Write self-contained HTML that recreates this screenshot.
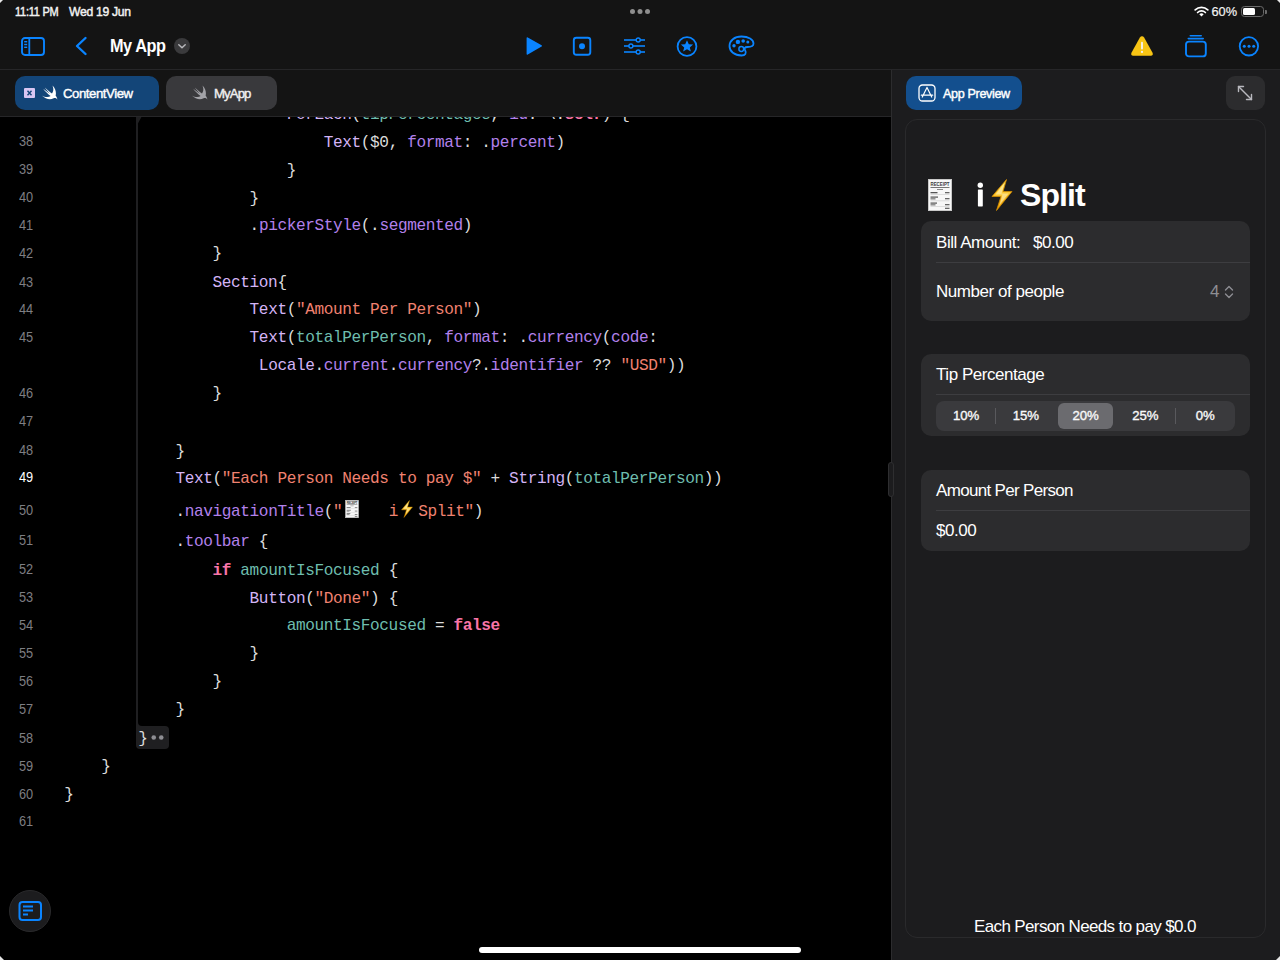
<!DOCTYPE html>
<html><head><meta charset="utf-8">
<style>
*{margin:0;padding:0;box-sizing:border-box}
html,body{width:1280px;height:960px;overflow:hidden;background:#000}
body{position:relative;font-family:"Liberation Sans",sans-serif;color:#fff}
.abs{position:absolute}
svg{display:block}
#top{left:0;top:0;width:1280px;height:70px;background:#141414}
#topline{left:0;top:69px;width:1280px;height:1px;background:#262628}
#tabbar{left:0;top:70px;width:891px;height:47px;background:#141414}
#tabline{left:0;top:116px;width:891px;height:1px;background:#262628}
#code{left:0;top:117px;width:891px;height:843px;background:#000;overflow:hidden}
#right{left:891px;top:70px;width:389px;height:890px;background:#1c1c1e}
#divider{left:891px;top:70px;width:1px;height:890px;background:#2c2c2e}
.st{font-size:12.8px;font-weight:normal;-webkit-text-stroke:0.45px #f2f2f2;color:#f2f2f2;top:3px;line-height:16px;letter-spacing:-0.3px;white-space:pre}
.tab{top:76px;height:34px;border-radius:10px}
.code{font-family:"Liberation Mono",monospace;font-size:16.1px;letter-spacing:-0.39px;white-space:pre;line-height:28px;height:28px}
.ln{font-size:14.5px;color:#7e7e82;left:19px;line-height:28px;height:28px;transform:scaleX(0.88);transform-origin:0 0}
.p{color:#dcdcdc}.t{color:#d3b4f6}.m{color:#b281eb}.v{color:#6ebdae}.s{color:#f08270}.k{color:#f975a8;font-weight:bold}
.sec{left:921px;width:329px;background:#2c2c2e;border-radius:10px}
.ui{font-size:17px;letter-spacing:-0.45px;white-space:pre;line-height:20px}
.seg{font-size:13.2px;font-weight:normal;line-height:16px;text-align:center;width:60px;letter-spacing:-0.1px;-webkit-text-stroke:0.35px #fff;color:#f2f2f5}
</style></head><body>
<div id="top" class="abs"></div>
<div id="topline" class="abs"></div>
<div id="tabbar" class="abs"></div>
<div id="tabline" class="abs"></div>
<div id="code" class="abs">
<!-- guide line -->
<div class="abs" style="left:136px;top:0;width:2px;height:612px;background:#1f1f21"></div>
<div class="abs" style="left:136px;top:-1px;width:0;height:0;border-left:6px solid #1f1f21;border-bottom:11px solid transparent"></div>
<div class="abs" style="left:136px;top:609px;width:33px;height:23px;background:#1f1f21;border-radius:0 4px 4px 4px"></div>
<svg class="abs" style="left:148px;top:616px" width="18" height="9" viewBox="0 0 18 9"><g fill="#8e8e93"><circle cx="5.75" cy="4.5" r="2.3"/><circle cx="13.25" cy="4.5" r="2.3"/></g></svg>
<div class="abs" style="left:138px;top:605px;width:4px;height:4px;background:#1f1f21"></div><div class="abs" style="left:138px;top:601px;width:8px;height:8px;background:#000;border-bottom-left-radius:4px"></div>
<div class="abs ln" style="top:10.00px">38</div>
<div class="abs ln" style="top:38.20px">39</div>
<div class="abs ln" style="top:66.30px">40</div>
<div class="abs ln" style="top:93.70px">41</div>
<div class="abs ln" style="top:121.80px">42</div>
<div class="abs ln" style="top:150.70px">43</div>
<div class="abs ln" style="top:177.80px">44</div>
<div class="abs ln" style="top:205.50px">45</div>
<div class="abs ln" style="top:261.80px">46</div>
<div class="abs ln" style="top:290.00px">47</div>
<div class="abs ln" style="top:319.00px">48</div>
<div class="abs ln" style="top:346.30px;color:#ffffff">49</div>
<div class="abs ln" style="top:379.30px">50</div>
<div class="abs ln" style="top:409.30px">51</div>
<div class="abs ln" style="top:438.20px">52</div>
<div class="abs ln" style="top:466.00px">53</div>
<div class="abs ln" style="top:493.70px">54</div>
<div class="abs ln" style="top:521.90px">55</div>
<div class="abs ln" style="top:549.70px">56</div>
<div class="abs ln" style="top:577.80px">57</div>
<div class="abs ln" style="top:606.90px">58</div>
<div class="abs ln" style="top:634.50px">59</div>
<div class="abs ln" style="top:662.80px">60</div>
<div class="abs ln" style="top:690.40px">61</div>
<div class="abs code" style="left:286.68px;top:-15.70px"><span class="t">ForEach</span><span class="p">(</span><span class="v">tipPercentages</span><span class="p">, </span><span class="m">id</span><span class="p">: \.</span><span class="k">self</span><span class="p">) {</span></div>
<div class="abs code" style="left:323.76px;top:11.50px"><span class="t">Text</span><span class="p">($0, </span><span class="m">format</span><span class="p">: .</span><span class="m">percent</span><span class="p">)</span></div>
<div class="abs code" style="left:286.68px;top:39.70px"><span class="p">}</span></div>
<div class="abs code" style="left:249.60px;top:67.80px"><span class="p">}</span></div>
<div class="abs code" style="left:249.60px;top:95.20px"><span class="p">.</span><span class="m">pickerStyle</span><span class="p">(.</span><span class="m">segmented</span><span class="p">)</span></div>
<div class="abs code" style="left:212.52px;top:123.30px"><span class="p">}</span></div>
<div class="abs code" style="left:212.52px;top:152.20px"><span class="t">Section</span><span class="p">{</span></div>
<div class="abs code" style="left:249.60px;top:179.30px"><span class="t">Text</span><span class="p">(</span><span class="s">"Amount Per Person"</span><span class="p">)</span></div>
<div class="abs code" style="left:249.60px;top:207.00px"><span class="t">Text</span><span class="p">(</span><span class="v">totalPerPerson</span><span class="p">, </span><span class="m">format</span><span class="p">: .</span><span class="m">currency</span><span class="p">(</span><span class="m">code</span><span class="p">:</span></div>
<div class="abs code" style="left:258.87px;top:235.10px"><span class="t">Locale</span><span class="p">.</span><span class="m">current</span><span class="p">.</span><span class="m">currency</span><span class="p">?.</span><span class="m">identifier</span><span class="p"> ?? </span><span class="s">"USD"</span><span class="p">))</span></div>
<div class="abs code" style="left:212.52px;top:263.30px"><span class="p">}</span></div>
<div class="abs code" style="left:175.44px;top:320.50px"><span class="p">}</span></div>
<div class="abs code" style="left:175.44px;top:347.80px"><span class="t">Text</span><span class="p">(</span><span class="s">"Each Person Needs to pay $"</span><span class="p"> + </span><span class="t">String</span><span class="p">(</span><span class="v">totalPerPerson</span><span class="p">))</span></div>
<div class="abs code" style="left:175.44px;top:380.80px"><span class="p">.</span><span class="m">navigationTitle</span><span class="p">(</span><span class="s">"</span><span style="display:inline-block;width:18.6px;height:10px;position:relative"><span style="position:absolute;left:3px;top:-6px"><svg width="14" height="18" viewBox="0 0 24 32" style="display:block"><rect x="0.5" y="0.5" width="23" height="31" fill="#f7f7f7" stroke="#c8c8c8" stroke-width="1"/><text x="12" y="7" font-family="Liberation Sans" font-weight="bold" font-size="6" text-anchor="middle" fill="#3a3a3a" textLength="19" lengthAdjust="spacingAndGlyphs">RECEIPT</text><rect x="2.5" y="8" width="19" height="0.9" fill="#666"/><rect x="9" y="10" width="6" height="1" fill="#888"/><rect x="2.5" y="13" width="7" height="1.3" fill="#555"/><rect x="17" y="13" width="4.5" height="1.3" fill="#666"/><rect x="2.5" y="15" width="19" height="0.7" fill="#d0d0d0"/><rect x="2.5" y="17.5" width="7.5" height="1.2" fill="#555"/><rect x="2.5" y="19.3" width="5" height="1.1" fill="#666"/><rect x="17" y="19" width="4.5" height="1.3" fill="#666"/><rect x="2.5" y="21.5" width="19" height="0.7" fill="#d0d0d0"/><rect x="2.5" y="23.5" width="6.5" height="1.2" fill="#555"/><rect x="2.5" y="25.3" width="5" height="1.1" fill="#666"/><rect x="17" y="25" width="4.5" height="1.3" fill="#666"/><rect x="2.5" y="27.3" width="19" height="0.7" fill="#d0d0d0"/><rect x="17" y="28.7" width="4.5" height="1.3" fill="#666"/></svg></span></span><span class="s">   i</span><span style="display:inline-block;width:20.2px;height:10px;position:relative"><span style="position:absolute;left:3.5px;top:-6px"><svg width="12" height="18" viewBox="0 0 22 32" style="display:block"><defs><linearGradient id="bg12" x1="0" y1="0" x2="0" y2="1"><stop offset="0" stop-color="#ffe35a"/><stop offset="1" stop-color="#f5a300"/></linearGradient></defs><path d="M15.5 0.5 L1 17.5 L10 17.5 L5.5 31.5 L21 12.5 L12 12.5 Z" fill="url(#bg12)" stroke="#d08a00" stroke-width="0.8" stroke-linejoin="round"/><path d="M13.5 4 L4.5 15.5 L11.5 15.5 L8.5 26 L17.5 14.5 L10.5 14.5 Z" fill="#fff6c8" opacity="0.55"/></svg></span></span><span class="s">Split"</span><span class="p">)</span></div>
<div class="abs code" style="left:175.44px;top:410.80px"><span class="p">.</span><span class="m">toolbar</span><span class="p"> {</span></div>
<div class="abs code" style="left:212.52px;top:439.70px"><span class="k">if</span><span class="p"> </span><span class="v">amountIsFocused</span><span class="p"> {</span></div>
<div class="abs code" style="left:249.60px;top:467.50px"><span class="t">Button</span><span class="p">(</span><span class="s">"Done"</span><span class="p">) {</span></div>
<div class="abs code" style="left:286.68px;top:495.20px"><span class="v">amountIsFocused</span><span class="p"> = </span><span class="k">false</span></div>
<div class="abs code" style="left:249.60px;top:523.40px"><span class="p">}</span></div>
<div class="abs code" style="left:212.52px;top:551.20px"><span class="p">}</span></div>
<div class="abs code" style="left:175.44px;top:579.30px"><span class="p">}</span></div>
<div class="abs code" style="left:138.36px;top:608.40px"><span class="p">}</span></div>
<div class="abs code" style="left:101.28px;top:636.00px"><span class="p">}</span></div>
<div class="abs code" style="left:64.20px;top:664.30px"><span class="p">}</span></div>
<!-- floating button -->
<div class="abs" style="left:9px;top:773px;width:42px;height:42px;border-radius:50%;background:#1c1c1e;border:1px solid #2a2a2c"></div>
<svg class="abs" style="left:17px;top:783px" width="26" height="22" viewBox="0 0 26 22"><rect x="2.5" y="2" width="21.5" height="18" rx="3" fill="none" stroke="#0a84ff" stroke-width="2"/><rect x="6" y="5.5" width="10" height="2" fill="#0a84ff"/><rect x="6" y="9.5" width="10" height="2" fill="#0a84ff"/><rect x="6" y="13.5" width="5" height="2" fill="#0a84ff"/></svg>
</div>
<div id="right" class="abs"></div>
<div id="divider" class="abs"></div>
<div class="abs" style="left:888px;top:462px;width:6px;height:35px;border-radius:3px;background:#1c1c1e;border:1px solid #2e2e30"></div>

<!-- status bar -->
<div class="abs st" style="left:15px;top:3.8px;transform:scaleX(0.86);transform-origin:0 0">11:11 PM</div>
<div class="abs st" style="left:68.5px;top:3.8px;transform:scaleX(0.95);transform-origin:0 0">Wed 19 Jun</div>
<svg class="abs" style="left:628px;top:6px" width="24" height="11" viewBox="0 0 24 11"><g fill="#8e8e8e"><circle cx="4.5" cy="5.5" r="2.5"/><circle cx="12" cy="5.5" r="2.5"/><circle cx="19.5" cy="5.5" r="2.5"/></g></svg>
<svg class="abs" style="left:1194px;top:6px" width="15" height="11" viewBox="0 0 15 11"><path d="M7.5 10.5 L5.3 8.2 A3.2 3.2 0 0 1 9.7 8.2 Z" fill="#fff"/><path d="M3.6 6.5 A5.6 5.6 0 0 1 11.4 6.5" stroke="#fff" stroke-width="1.7" fill="none" stroke-linecap="round"/><path d="M1.2 3.9 A9 9 0 0 1 13.8 3.9" stroke="#fff" stroke-width="1.7" fill="none" stroke-linecap="round"/></svg>
<div class="abs st" style="left:1211.5px;letter-spacing:0;top:3.5px;-webkit-text-stroke:0.2px #f2f2f2">60%</div>
<div class="abs" style="left:1241px;top:6px;width:23px;height:11px;border-radius:3.5px;border:1px solid #6a6a6a"></div>
<div class="abs" style="left:1243px;top:8px;width:11.5px;height:7px;border-radius:1.5px;background:#fff"></div>
<div class="abs" style="left:1265px;top:9.5px;width:1.5px;height:4px;border-radius:0 1px 1px 0;background:#6a6a6a"></div>

<!-- toolbar left -->
<svg class="abs" style="left:20px;top:36px" width="26" height="20" viewBox="0 0 26 20"><rect x="2" y="2" width="22" height="17" rx="3" fill="none" stroke="#0a84ff" stroke-width="1.9"/><line x1="9.3" y1="2" x2="9.3" y2="19" stroke="#0a84ff" stroke-width="1.8"/><rect x="4.2" y="5" width="3" height="1.4" fill="#0a84ff"/><rect x="4.2" y="7.8" width="3" height="1.4" fill="#0a84ff"/><rect x="4.2" y="10.6" width="3" height="1.4" fill="#0a84ff"/></svg>
<svg class="abs" style="left:74px;top:36px" width="14" height="20" viewBox="0 0 14 20"><path d="M11.5 2 L3 10 L11.5 18" stroke="#0a84ff" stroke-width="2.4" fill="none" stroke-linecap="round" stroke-linejoin="round"/></svg>
<div class="abs" style="left:110px;top:36px;font-size:18.5px;font-weight:bold;line-height:20px;letter-spacing:-0.5px;white-space:pre;transform:scaleX(0.88);transform-origin:0 0">My App</div>
<div class="abs" style="left:174px;top:38px;width:16px;height:16px;border-radius:50%;background:#3a3a3c"></div>
<svg class="abs" style="left:174px;top:38px" width="16" height="16" viewBox="0 0 16 16"><path d="M4.8 6.8 L8 9.8 L11.2 6.8" stroke="#b8b8bc" stroke-width="1.5" fill="none" stroke-linecap="round" stroke-linejoin="round"/></svg>

<!-- toolbar center -->
<svg class="abs" style="left:524px;top:36px" width="20" height="20" viewBox="0 0 20 20"><path d="M2.6 2.2 Q2.6 0.9 3.8 1.6 L17.6 9.2 Q18.6 9.9 17.6 10.6 L3.8 18.4 Q2.6 19.1 2.6 17.8 Z" fill="#0a84ff"/></svg>
<svg class="abs" style="left:572px;top:36px" width="20" height="20" viewBox="0 0 20 20"><rect x="1.8" y="1.8" width="16.5" height="17" rx="2.5" fill="none" stroke="#0a84ff" stroke-width="1.9"/><circle cx="10" cy="10.2" r="3" fill="#0a84ff"/></svg>
<svg class="abs" style="left:623px;top:36px" width="23" height="20" viewBox="0 0 23 20"><g stroke="#0a84ff" stroke-width="1.6" fill="none"><line x1="1" y1="4" x2="22" y2="4"/><line x1="1" y1="10" x2="22" y2="10"/><line x1="1" y1="16" x2="22" y2="16"/></g><g fill="#141414" stroke="#0a84ff" stroke-width="1.4"><circle cx="15.2" cy="4" r="2.0"/><circle cx="7.9" cy="10" r="2.0"/><circle cx="15.2" cy="16" r="2.0"/></g></svg>
<svg class="abs" style="left:675px;top:35px" width="24" height="24" viewBox="0 0 24 24"><circle cx="12" cy="11.5" r="9.4" fill="none" stroke="#0a84ff" stroke-width="1.8"/><path d="M12 5.3 L13.8 9.3 L18.1 9.6 L14.8 12.4 L15.9 16.6 L12 14.3 L8.1 16.6 L9.2 12.4 L5.9 9.6 L10.2 9.3 Z" fill="#0a84ff"/></svg>
<svg class="abs" style="left:728px;top:35px" width="27" height="22" viewBox="0 0 27 22"><path d="M13.5 1.5 C20.5 1.5 25.5 4.5 25.5 8.5 C25.5 11.5 22.5 12 19.5 12 C16.5 12 16 13.5 17.2 15.5 C18.6 18 17.5 20.5 13.5 20.5 C6.5 20.5 1.5 16.5 1.5 11 C1.5 5.5 6.5 1.5 13.5 1.5 Z" fill="none" stroke="#0a84ff" stroke-width="1.8"/><circle cx="6" cy="10.7" r="1.7" fill="#0a84ff"/><circle cx="9.9" cy="6.9" r="2.2" fill="#0a84ff"/><circle cx="15.2" cy="6" r="1.8" fill="#0a84ff"/><circle cx="19.8" cy="7" r="1.5" fill="#0a84ff"/><circle cx="13.3" cy="14" r="2.4" fill="none" stroke="#0a84ff" stroke-width="1.5"/></svg>

<!-- toolbar right -->
<svg class="abs" style="left:1130px;top:35px" width="24" height="22" viewBox="0 0 24 22"><path d="M12 1.2 Q13.3 1.2 14.1 2.6 L22.4 17.6 Q23.8 20.6 20.8 20.8 L3.2 20.8 Q0.2 20.6 1.6 17.6 L9.9 2.6 Q10.7 1.2 12 1.2 Z" fill="#f7c414"/><rect x="11.1" y="6.8" width="1.8" height="7.6" rx="0.9" fill="#f4f4f4"/><circle cx="12" cy="16.9" r="1.1" fill="#f4f4f4"/></svg>
<svg class="abs" style="left:1184px;top:34px" width="24" height="24" viewBox="0 0 24 24"><rect x="5.5" y="1" width="12.5" height="1.6" rx="0.8" fill="#0a84ff"/><rect x="3.5" y="3.8" width="16.5" height="1.6" rx="0.8" fill="#0a84ff"/><rect x="2" y="7.6" width="19.8" height="14.8" rx="3" fill="none" stroke="#0a84ff" stroke-width="1.9"/></svg>
<svg class="abs" style="left:1237px;top:34px" width="24" height="24" viewBox="0 0 24 24"><circle cx="11.9" cy="12.3" r="9.2" fill="none" stroke="#0a84ff" stroke-width="1.8"/><circle cx="7.3" cy="12.3" r="1.5" fill="#0a84ff"/><circle cx="12" cy="12.3" r="1.5" fill="#0a84ff"/><circle cx="16.7" cy="12.3" r="1.5" fill="#0a84ff"/></svg>

<!-- tabs -->
<div class="abs tab" style="left:15px;width:144px;background:#134578"></div>
<div class="abs" style="left:24px;top:88px;width:11px;height:10px;background:#d9c6f2;border-radius:1px"></div>
<svg class="abs" style="left:24px;top:88px" width="11" height="10" viewBox="0 0 11 10"><path d="M3.5 2.8 L7.5 7.2 M7.5 2.8 L3.5 7.2" stroke="#134578" stroke-width="1.4"/></svg>
<svg class="abs" style="left:40.5px;top:84.8px" width="17" height="15" viewBox="0 0 17 15"><path d="M11.5 0.5 C14.5 3.5 15.5 7.5 14.6 10.5 C15.6 11.8 16.3 13.2 16.3 14.5 C15.3 13.2 13.8 12.8 12.6 13.3 C9 15.2 4.5 14 0.8 10.5 C4 12.3 7.6 12.6 9.6 11 C7 9.2 4 6.3 2.2 3.8 C4.8 6 7.8 8 9.2 8.8 C7 6.7 5 4.3 3.8 2.5 C6.3 5 9.3 7.4 11 8.6 C12.5 6.6 12.8 3.6 11.5 0.5 Z" fill="#ffffff"/></svg>
<div class="abs" style="left:63px;top:86px;font-size:13.2px;font-weight:normal;-webkit-text-stroke:0.4px #fff;line-height:15px;letter-spacing:-0.45px;white-space:pre">ContentView</div>
<div class="abs tab" style="left:166px;width:111px;background:#39393c"></div>
<svg class="abs" style="left:190.5px;top:84.8px" width="17" height="15" viewBox="0 0 17 15"><path d="M11.5 0.5 C14.5 3.5 15.5 7.5 14.6 10.5 C15.6 11.8 16.3 13.2 16.3 14.5 C15.3 13.2 13.8 12.8 12.6 13.3 C9 15.2 4.5 14 0.8 10.5 C4 12.3 7.6 12.6 9.6 11 C7 9.2 4 6.3 2.2 3.8 C4.8 6 7.8 8 9.2 8.8 C7 6.7 5 4.3 3.8 2.5 C6.3 5 9.3 7.4 11 8.6 C12.5 6.6 12.8 3.6 11.5 0.5 Z" fill="#a3a3a8"/></svg>
<div class="abs" style="left:214px;top:86px;font-size:13.2px;font-weight:normal;-webkit-text-stroke:0.4px #f0f0f0;line-height:15px;letter-spacing:-0.9px;white-space:pre;color:#f0f0f0">MyApp</div>

<!-- right panel -->
<div class="abs" style="left:906px;top:76px;width:116px;height:34px;border-radius:10px;background:#134f8e"></div>
<svg class="abs" style="left:918px;top:84px" width="18" height="18" viewBox="0 0 18 18"><rect x="1" y="1" width="16" height="16" rx="3.5" fill="none" stroke="#fff" stroke-width="1.3"/><path d="M9 3.5 L4.3 13 M9 3.5 L13.7 13 M3.3 11.2 L14.7 11.2" stroke="#fff" stroke-width="1.2" stroke-linecap="round"/></svg>
<div class="abs" style="left:943px;top:87px;font-size:12.6px;font-weight:normal;-webkit-text-stroke:0.4px #fff;line-height:15px;letter-spacing:-0.35px;white-space:pre">App Preview</div>
<div class="abs" style="left:1226px;top:76px;width:39px;height:34px;border-radius:9px;background:#2c2c2e"></div>
<svg class="abs" style="left:1236px;top:84px" width="18" height="18" viewBox="0 0 18 18"><g stroke="#b8b8be" stroke-width="1.4" fill="none" stroke-linecap="round" stroke-linejoin="round"><path d="M2.5 2.5 L15.5 15.5"/><path d="M2.5 7.5 L2.5 2.5 L7.5 2.5"/><path d="M10.5 15.5 L15.5 15.5 L15.5 10.5"/></g></svg>

<div class="abs" style="left:905px;top:119px;width:361px;height:819px;border-radius:12px;border:1px solid #2a2a2c;background:#1c1c1e"></div>
<!--PREVIEW-->
<div class="abs" style="left:927.5px;top:179px"><svg width="24" height="32" viewBox="0 0 24 32" style="display:block"><rect x="0.5" y="0.5" width="23" height="31" fill="#f7f7f7" stroke="#c8c8c8" stroke-width="1"/><text x="12" y="7" font-family="Liberation Sans" font-weight="bold" font-size="6" text-anchor="middle" fill="#3a3a3a" textLength="19" lengthAdjust="spacingAndGlyphs">RECEIPT</text><rect x="2.5" y="8" width="19" height="0.9" fill="#666"/><rect x="9" y="10" width="6" height="1" fill="#888"/><rect x="2.5" y="13" width="7" height="1.3" fill="#555"/><rect x="17" y="13" width="4.5" height="1.3" fill="#666"/><rect x="2.5" y="15" width="19" height="0.7" fill="#d0d0d0"/><rect x="2.5" y="17.5" width="7.5" height="1.2" fill="#555"/><rect x="2.5" y="19.3" width="5" height="1.1" fill="#666"/><rect x="17" y="19" width="4.5" height="1.3" fill="#666"/><rect x="2.5" y="21.5" width="19" height="0.7" fill="#d0d0d0"/><rect x="2.5" y="23.5" width="6.5" height="1.2" fill="#555"/><rect x="2.5" y="25.3" width="5" height="1.1" fill="#666"/><rect x="17" y="25" width="4.5" height="1.3" fill="#666"/><rect x="2.5" y="27.3" width="19" height="0.7" fill="#d0d0d0"/><rect x="17" y="28.7" width="4.5" height="1.3" fill="#666"/></svg></div>
<svg class="abs" style="left:975px;top:180px" width="12" height="30" viewBox="0 0 12 30"><circle cx="5.3" cy="5.2" r="2.7" fill="#fff"/><rect x="2.9" y="9.5" width="4.9" height="16.9" rx="0.6" fill="#fff"/></svg>
<div class="abs" style="left:991px;top:179px"><svg width="22" height="32" viewBox="0 0 22 32" style="display:block"><defs><linearGradient id="bg22" x1="0" y1="0" x2="0" y2="1"><stop offset="0" stop-color="#ffe35a"/><stop offset="1" stop-color="#f5a300"/></linearGradient></defs><path d="M15.5 0.5 L1 17.5 L10 17.5 L5.5 31.5 L21 12.5 L12 12.5 Z" fill="url(#bg22)" stroke="#d08a00" stroke-width="0.8" stroke-linejoin="round"/><path d="M13.5 4 L4.5 15.5 L11.5 15.5 L8.5 26 L17.5 14.5 L10.5 14.5 Z" fill="#fff6c8" opacity="0.55"/></svg></div>
<div class="abs" style="left:1020px;top:177px;font-size:32px;font-weight:bold;line-height:36px;letter-spacing:-0.9px;white-space:pre">Split</div>

<div class="abs sec" style="top:221px;height:100px"></div>
<div class="abs" style="left:936px;top:262px;width:314px;height:1px;background:#3d3d40"></div>
<div class="abs ui" style="left:936px;top:233px">Bill Amount:</div>
<div class="abs ui" style="left:1033px;top:233px">$0.00</div>
<div class="abs ui" style="left:936px;top:282px">Number of people</div>
<div class="abs ui" style="left:1210px;top:282px;color:#8e8e93">4</div>
<svg class="abs" style="left:1224px;top:285px" width="10" height="14" viewBox="0 0 10 14"><path d="M1.5 5 L5 1.5 L8.5 5 M1.5 9 L5 12.5 L8.5 9" stroke="#8e8e93" stroke-width="1.4" fill="none" stroke-linecap="round" stroke-linejoin="round"/></svg>

<div class="abs sec" style="top:354px;height:82px"></div>
<div class="abs ui" style="left:936px;top:365px">Tip Percentage</div>
<div class="abs" style="left:936px;top:394px;width:314px;height:1px;background:#3d3d40"></div>
<div class="abs" style="left:936px;top:401px;width:299px;height:30px;border-radius:8px;background:#3a3a3d"></div>
<div class="abs" style="left:1057.6px;top:403px;width:55.8px;height:26px;border-radius:6px;background:#6b6b6f"></div>
<div class="abs" style="left:995px;top:408px;width:1px;height:16px;background:#59595d"></div>
<div class="abs" style="left:1175px;top:408px;width:1px;height:16px;background:#59595d"></div>
<div class="abs seg" style="left:936px;top:408px">10%</div>
<div class="abs seg" style="left:995.8px;top:408px">15%</div>
<div class="abs seg" style="left:1055.6px;top:408px">20%</div>
<div class="abs seg" style="left:1115.4px;top:408px">25%</div>
<div class="abs seg" style="left:1175.2px;top:408px">0%</div>

<div class="abs sec" style="top:470px;height:81px"></div>
<div class="abs ui" style="left:936px;top:480.5px;letter-spacing:-0.68px">Amount Per Person</div>
<div class="abs" style="left:936px;top:510px;width:314px;height:1px;background:#3d3d40"></div>
<div class="abs ui" style="left:936px;top:521px">$0.00</div>

<div class="abs ui" style="left:974px;top:916.5px;letter-spacing:-0.63px">Each Person Needs to pay $0.0</div>

<div class="abs" style="left:1277px;top:0;width:0;height:0;border-top:3px solid #e8e8e8;border-left:3px solid transparent"></div>
<div class="abs" style="left:1276px;top:956px;width:0;height:0;border-bottom:4px solid #e8e8e8;border-left:4px solid transparent"></div>
<div class="abs" style="left:0;top:956px;width:0;height:0;border-bottom:4px solid #e8e8e8;border-right:4px solid transparent"></div>
<div class="abs" style="left:0;top:0;width:0;height:0;border-top:3px solid #e8e8e8;border-right:3px solid transparent"></div>
<!-- home indicator -->
<div class="abs" style="left:479px;top:947px;width:322px;height:6px;border-radius:3px;background:#fff"></div>
</body></html>
